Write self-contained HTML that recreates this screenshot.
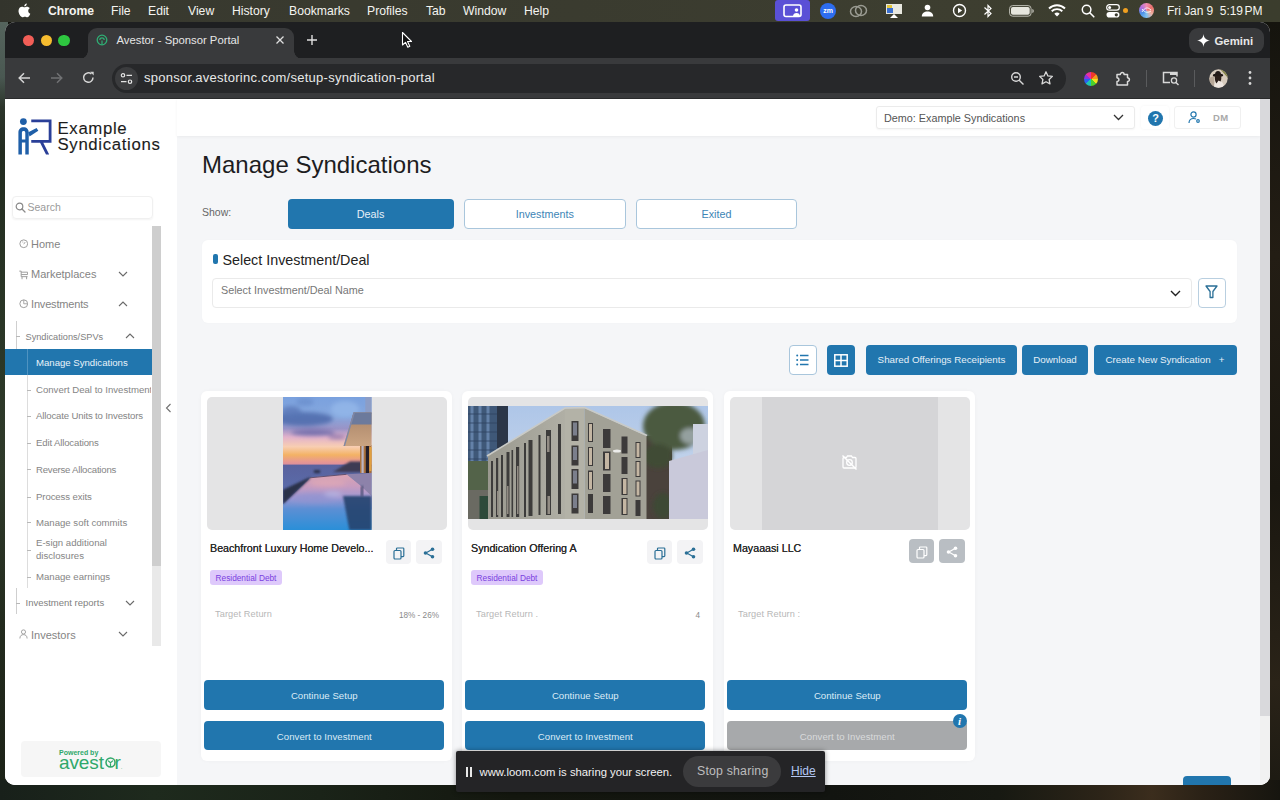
<!DOCTYPE html>
<html lang="en">
<head>
<meta charset="utf-8">
<title>Avestor - Sponsor Portal</title>
<style>
*{box-sizing:border-box;margin:0;padding:0}
html,body{width:1280px;height:800px;overflow:hidden}
body{position:relative;background:#14170f;font-family:"Liberation Sans",sans-serif;color:#222}
.abs{position:absolute}
#wall{left:0;top:0;width:1280px;height:800px;background:#12140e}
#walll{left:0;top:22px;width:8px;height:763px;background:linear-gradient(180deg,#55645d 0,#4a5852 55px,#2c352b 85px,#232c20 130px,#2a3626 300px,#2f3a2a 450px,#232b1e 600px,#1c2217 763px)}
#wallb{left:0;top:780px;width:1280px;height:20px;background:linear-gradient(90deg,#18201a 0,#1e2a1d 12%,#1a2318 25%,#14170f 40%,#121410 65%,#171912 78%,#2c2418 86%,#3b2d1d 90%,#2a2116 94%,#16150f 100%)}
/* menubar */
#menubar{left:0;top:0;width:1280px;height:22px;background:linear-gradient(90deg,#33342c 0,#38392f 10%,#3a3b2f 45%,#3d3e30 75%,#3b3d2d 100%);color:#fff;font-size:12.2px}
#menubar span.m{position:absolute;top:0;line-height:22px;white-space:nowrap;color:#f4f4f0}
/* window */
#win{left:5px;top:22px;width:1265px;height:763px;border-radius:10px 10px 10px 10px;overflow:hidden;background:#fff}
#tabbar{left:0;top:0;width:1265px;height:37px;background:#1e1f21}
#tab{left:83px;top:5.500px;width:206px;height:31.500px;background:#393a3c;border-radius:9px 9px 0 0}
#toolbar{left:0;top:36px;width:1265px;height:41px;background:#393a3c;border-bottom:1px solid #2a2b2c}
#url{left:107px;top:6px;width:954px;height:29px;border-radius:15px;background:#27282a}
#page{left:0;top:77px;width:1265px;height:686px;background:#f5f6f8;overflow:hidden}

/* page */
#side{left:0;top:0;width:172px;height:686px;background:#fff}
#hdr{left:172px;top:0;width:1083px;height:37px;background:#fff;box-shadow:0 1px 3px rgba(0,0,0,.05)}
.nav{position:absolute;font-size:11px;line-height:14px;color:#848484;white-space:nowrap}
.sub{position:absolute;font-size:9.600px;line-height:13px;color:#858585;white-space:nowrap;left:31px}
.tick{position:absolute;width:4px;height:1px;background:#b8b8b8}
.chev{position:absolute}
.btn{position:absolute;background:#2176ae;color:#fff;border-radius:4px;text-align:center;white-space:nowrap}

.card{position:absolute;top:292px;width:251px;height:370px;background:#fff;border-radius:6px;box-shadow:0 0 4px rgba(0,0,0,.03)}
.imgbox{position:absolute;left:6px;top:5.500px;width:240px;height:133px;border-radius:5px;background:#e4e4e5;overflow:hidden}
.ctitle{position:absolute;left:9px;top:150px;font-size:10.700px;line-height:14px;color:#2b2b2b;white-space:nowrap;letter-spacing:0;text-shadow:0 0 .12px #2b2b2b}
.ibtn{position:absolute;top:149px;width:25.500px;height:24px;border-radius:4px;background:#f3f3f5}
.tag{position:absolute;left:9px;top:278.500px;height:15.500px;width:72px;border-radius:3px;background:#dec9fb;color:#7a3fe0;font-size:8.300px;line-height:17px;text-align:center;white-space:nowrap}
.tr{position:absolute;left:14px;top:216.500px;font-size:9.200px;line-height:13px;color:#b7b7b7;white-space:nowrap;letter-spacing:.1px}
.tv{position:absolute;right:13px;top:217.500px;font-size:8.200px;line-height:13px;color:#8a8a8a;white-space:nowrap}
.cbtn{position:absolute;left:3.300px;width:240px;height:30px;border-radius:4px;background:#2176ae;color:#dcebf6;font-size:9.600px;line-height:31.500px;text-align:center;letter-spacing:.05px}
</style>
</head>
<body>
<div id="wall" class="abs"></div>
<div id="walll" class="abs"></div>
<div class="abs" style="left:1268px;top:22px;width:12px;height:778px;background:linear-gradient(180deg,#15140e 0,#231d14 30%,#1a1710 60%,#2a2318 85%,#1b1912 100%)"></div>
<div id="wallb" class="abs"></div>
<div id="menubar" class="abs">
 <svg class="abs" style="left:18px;top:3px" width="13" height="15" viewBox="0 0 13 15"><path fill="#fff" d="M9.1 3.7c.9 0 2 .5 2.7 1.5-2.3 1.4-1.9 4.6.5 5.5-.5 1.400-1.700 3.500-3.100 3.500-.8 0-1.300-.5-2.300-.5s-1.600.5-2.400.5C2.700 14.200.5 10.700.5 8 .5 5.200 2.300 3.700 4 3.700c1 0 1.800.600 2.500.600.600 0 1.500-.600 2.600-.600zM8.800.4c.1 1.400-1 2.900-2.500 2.900C6.100 1.900 7.400.5 8.800.4z"/></svg>
 <span class="m" style="left:48px;font-weight:bold">Chrome</span>
 <span class="m" style="left:111px">File</span>
 <span class="m" style="left:148px">Edit</span>
 <span class="m" style="left:188px">View</span>
 <span class="m" style="left:232px">History</span>
 <span class="m" style="left:289px">Bookmarks</span>
 <span class="m" style="left:367px">Profiles</span>
 <span class="m" style="left:426px">Tab</span>
 <span class="m" style="left:463px">Window</span>
 <span class="m" style="left:524px">Help</span>
 <div class="abs" style="left:775px;top:0;width:35px;height:21px;background:#5a50d6;border-radius:3px"></div>
 <svg class="abs" style="left:783px;top:4px" width="20" height="14" viewBox="0 0 20 14"><rect x="1" y="1" width="17" height="11.500" rx="2" fill="none" stroke="#fff" stroke-width="1.600"/><circle cx="13.500" cy="6" r="1.800" fill="#fff"/><path d="M10 12.500c0-2.500 1.500-3.600 3.500-3.600s3.500 1.100 3.500 3.600z" fill="#fff"/></svg>
 <div class="abs" style="left:820px;top:3px;width:16px;height:16px;border-radius:8px;background:#2d6df0;color:#fff;font-size:7px;font-weight:bold;line-height:15px;text-align:center">zm</div>
 <svg class="abs" style="left:849px;top:4px" width="19" height="14" viewBox="0 0 19 14"><ellipse cx="7" cy="7.500" rx="5.500" ry="5" fill="none" stroke="#9a9b92" stroke-width="1.500"/><ellipse cx="12" cy="6.500" rx="5.500" ry="5" fill="none" stroke="#9a9b92" stroke-width="1.500"/></svg>
 <svg class="abs" style="left:885px;top:3px" width="18" height="16" viewBox="0 0 18 16"><rect x="1" y="1" width="16" height="10" fill="#e8e8e0"/><rect x="2" y="5" width="6" height="5" fill="#3a6fd0"/><rect x="2" y="2" width="5" height="3" fill="#e2c53a"/><path d="M5 15l4-4 4 4z" fill="#fff"/></svg>
 <svg class="abs" style="left:921px;top:4px" width="13" height="13" viewBox="0 0 13 13"><circle cx="6.500" cy="3.500" r="2.800" fill="#fff"/><path d="M.8 12.500c0-3.500 2.500-5 5.700-5s5.700 1.500 5.700 5z" fill="#fff"/></svg>
 <svg class="abs" style="left:952px;top:3px" width="15" height="15" viewBox="0 0 15 15"><circle cx="7.500" cy="7.500" r="6" fill="none" stroke="#fff" stroke-width="1.400"/><path d="M6 4.800l4.200 2.700L6 10.200z" fill="#fff"/></svg>
 <svg class="abs" style="left:983px;top:3px" width="10" height="16" viewBox="0 0 10 16"><path d="M1.500 4.500l6.500 6L5 13.500v-11L8 5.500l-6.500 6" fill="none" stroke="#fff" stroke-width="1.200"/></svg>
 <svg class="abs" style="left:1009px;top:5px" width="26" height="12" viewBox="0 0 26 12"><rect x=".6" y=".6" width="21.500" height="10.600" rx="3" fill="none" stroke="#bdbdb4" stroke-width="1"/><rect x="2" y="2" width="18.700" height="7.800" rx="1.800" fill="#e6e6de"/><path d="M23.300 4v4c1-.3 1.500-1 1.500-2s-.5-1.700-1.500-2z" fill="#bdbdb4"/></svg>
 <svg class="abs" style="left:1048px;top:4px" width="18" height="13" viewBox="0 0 18 13"><path d="M1 4.500a11.500 11.500 0 0 1 16 0M3.700 7.300a7.600 7.600 0 0 1 10.600 0" fill="none" stroke="#fff" stroke-width="1.900"/><path d="M6.300 9.800a3.900 3.900 0 0 1 5.400 0L9 12.600z" fill="#fff"/></svg>
 <svg class="abs" style="left:1081px;top:4px" width="14" height="14" viewBox="0 0 14 14"><circle cx="5.600" cy="5.600" r="4.300" fill="none" stroke="#fff" stroke-width="1.500"/><path d="M8.800 8.800l4 4" stroke="#fff" stroke-width="1.600" stroke-linecap="round"/></svg>
 <svg class="abs" style="left:1106px;top:4px" width="14" height="14" viewBox="0 0 14 14"><rect x=".7" y=".7" width="12.600" height="5.400" rx="2.700" fill="none" stroke="#fff" stroke-width="1.200"/><circle cx="3.600" cy="3.400" r="1.500" fill="#fff"/><rect x=".5" y="8" width="13" height="5.600" rx="2.800" fill="#fff"/><circle cx="10.300" cy="10.800" r="1.600" fill="#3a3b2e"/></svg>
 <div class="abs" style="left:1123px;top:8px;width:5px;height:5px;border-radius:3px;background:#f0a020"></div>
 <div class="abs" style="left:1139px;top:3px;width:15px;height:15px;border-radius:8px;background:conic-gradient(#f08bb0,#e9706a,#f0b0a0,#7fc0f0,#4a90e8,#b070e0,#f08bb0)"></div>
 <svg class="abs" style="left:1139px;top:3px" width="15" height="15" viewBox="0 0 15 15"><path d="M3 9c3-5 6-5 9-2M3 6c3 4 6 4 9 2" fill="none" stroke="#fff" stroke-width="1" opacity=".85"/></svg>
 <span class="m" style="left:1167px;font-size:12px;letter-spacing:-.05px">Fri Jan 9&nbsp; 5:19<span style="margin-left:1.500px">PM</span></span>
</div>
<div id="win" class="abs">
 <div id="tabbar" class="abs">
  <div class="abs" style="left:18px;top:13px;width:11.200px;height:11.200px;border-radius:6px;background:#f25e57"></div>
  <div class="abs" style="left:35.800px;top:13px;width:11.200px;height:11.200px;border-radius:6px;background:#f6bc2f"></div>
  <div class="abs" style="left:53.400px;top:13px;width:11.200px;height:11.200px;border-radius:6px;background:#2ec640"></div>
  <div id="tab" class="abs"></div>
  <div class="abs" style="left:75px;top:29px;width:8px;height:8px;background:radial-gradient(circle at 0 0,transparent 7.500px,#393a3c 8px)"></div>
  <div class="abs" style="left:289px;top:29px;width:8px;height:8px;background:radial-gradient(circle at 100% 0,transparent 7.500px,#393a3c 8px)"></div>
  <svg class="abs" style="left:91px;top:12px" width="12" height="12" viewBox="0 0 12 12"><circle cx="6" cy="6" r="4.800" fill="none" stroke="#2fae74" stroke-width="1.300"/><path d="M6 10.500V6.500M3.800 6a2.200 2.200 0 0 1 4.400 0" fill="none" stroke="#2fae74" stroke-width="1.200"/></svg>
  <span class="abs" style="left:111.500px;top:11px;font-size:11.300px;line-height:14px;color:#e6e6e6;white-space:nowrap">Avestor - Sponsor Portal</span>
  <svg class="abs" style="left:270px;top:13px" width="10" height="10" viewBox="0 0 10 10"><path d="M1.500 1.500l7 7M8.500 1.500l-7 7" stroke="#e0e0e0" stroke-width="1.300"/></svg>
  <svg class="abs" style="left:301px;top:12px" width="12" height="12" viewBox="0 0 12 12"><path d="M6 1v10M1 6h10" stroke="#e0e0e0" stroke-width="1.400"/></svg>
  <svg class="abs" style="left:396px;top:9px" width="12" height="18" viewBox="0 0 12 18"><path d="M1.500 1.500v12.500l3-2.700 2.300 5 2-1-2.300-4.800h4z" fill="#111" stroke="#fff" stroke-width="1.100" stroke-linejoin="round"/></svg>
  <div class="abs" style="left:1184px;top:6px;width:75px;height:25px;border-radius:9px;background:#393a3c"></div>
  <svg class="abs" style="left:1192px;top:12px" width="13" height="13" viewBox="0 0 13 13"><path d="M6.500 0C7 4 9 6 13 6.500 9 7 7 9 6.500 13 6 9 4 7 0 6.500 4 6 6 4 6.500 0z" fill="#fff"/></svg>
  <span class="abs" style="left:1209.500px;top:11.500px;font-size:11.400px;font-weight:bold;line-height:14px;color:#e8e8e8;letter-spacing:0">Gemini</span>
 </div>
 <div id="toolbar" class="abs">
  <svg class="abs" style="left:13px;top:14px" width="13" height="12" viewBox="0 0 13 12"><path d="M12 6H1.500M6 1.200L1.200 6 6 10.800" fill="none" stroke="#d4d4d4" stroke-width="1.500"/></svg>
  <svg class="abs" style="left:45px;top:14px" width="13" height="12" viewBox="0 0 13 12"><path d="M1 6h10.500M7 1.200L11.800 6 7 10.800" fill="none" stroke="#707173" stroke-width="1.500"/></svg>
  <svg class="abs" style="left:77px;top:13px" width="13" height="13" viewBox="0 0 13 13"><path d="M11 6.500A4.700 4.700 0 1 1 9.400 3" fill="none" stroke="#d4d4d4" stroke-width="1.500"/><path d="M8.200.800h3.500v3.600z" fill="#d4d4d4"/></svg>
  <div id="url" class="abs"></div>
  <div class="abs" style="left:110px;top:9px;width:23px;height:23px;border-radius:12px;background:#3b3c3e"></div>
  <svg class="abs" style="left:115px;top:14px" width="13" height="13" viewBox="0 0 13 13"><circle cx="3" cy="3.300" r="1.700" fill="none" stroke="#e4e4e4" stroke-width="1.200"/><path d="M6.500 3.300h5.500M1 9.700h5.500" stroke="#e4e4e4" stroke-width="1.300"/><circle cx="10" cy="9.700" r="1.700" fill="none" stroke="#e4e4e4" stroke-width="1.200"/></svg>
  <span class="abs" style="left:139px;top:12px;font-size:13px;line-height:16px;color:#e8e8e8;white-space:nowrap;letter-spacing:.27px">sponsor.avestorinc.com/setup-syndication-portal</span>
  <svg class="abs" style="left:1005px;top:13px" width="15" height="15" viewBox="0 0 15 15"><circle cx="6" cy="6" r="4.300" fill="none" stroke="#d8d8d8" stroke-width="1.400"/><path d="M9.200 9.200l4.300 4.300M4 6h4" stroke="#d8d8d8" stroke-width="1.400"/></svg>
  <svg class="abs" style="left:1033px;top:12px" width="16" height="16" viewBox="0 0 16 16"><path d="M8 1.800l1.900 4.100 4.500.5-3.300 3.100.9 4.400L8 11.700l-4 2.200.9-4.400L1.600 6.400l4.500-.5z" fill="none" stroke="#d8d8d8" stroke-width="1.300" stroke-linejoin="round"/></svg>
  <div class="abs" style="left:1078.500px;top:13.500px;width:14px;height:14px;border-radius:7px;background:conic-gradient(#f03a2a 0 45deg,#f59a1a 45deg 90deg,#f2e21c 90deg 135deg,#4cd02c 135deg 180deg,#1fc3b0 180deg 225deg,#2a62f0 225deg 270deg,#8a34e0 270deg 315deg,#ea2fa0 315deg 360deg)"></div>
  <svg class="abs" style="left:1109px;top:11px" width="18" height="18" viewBox="0 0 18 18"><path d="M3 5.500h3.300a1.900 1.900 0 1 1 3.800 0h3.400v3.300a1.900 1.900 0 1 1 0 3.800v3.400H3v-3.400a1.900 1.900 0 1 0 0-3.800z" fill="none" stroke="#dadada" stroke-width="1.500" stroke-linejoin="round"/></svg>
  <div class="abs" style="left:1141px;top:12px;width:1px;height:17px;background:#5a5b5d"></div>
  <svg class="abs" style="left:1157px;top:12px" width="18" height="17" viewBox="0 0 18 17"><path d="M8 12.500H1.500v-10h13.500v4" fill="none" stroke="#d8d8d8" stroke-width="1.500"/><path d="M8 2.500h7v2.500H8z" fill="#d8d8d8"/><circle cx="12" cy="10.500" r="2.600" fill="none" stroke="#d8d8d8" stroke-width="1.300"/><path d="M14 12.500l2.500 2.500" stroke="#d8d8d8" stroke-width="1.400"/></svg>
  <div class="abs" style="left:1189px;top:12px;width:1px;height:17px;background:#5a5b5d"></div>
  <svg class="abs" style="left:1204px;top:11px" width="19" height="19" viewBox="0 0 19 19"><defs><clipPath id="av"><circle cx="9.500" cy="9.500" r="9.200"/></clipPath></defs><g clip-path="url(#av)"><rect width="19" height="19" fill="#d6cabc"/><path d="M11 0h8v9z" fill="#86864a"/><path d="M0 9l5-2v12H0z" fill="#b8a898"/><path d="M5 19c0-5 2-7 5-7s5 2.500 5 7z" fill="#eee6e0"/><ellipse cx="9" cy="6.200" rx="5.200" ry="1.700" fill="#1e1614"/><path d="M6 6c0-3 1.200-4 3-4s3 1 3 4z" fill="#231a18"/><path d="M6 6.500c-.5 3 0 6 1.500 8l2-3 2 1c1-2 1-4 .5-6z" fill="#2a1e1a"/></g></svg>
  <svg class="abs" style="left:1243px;top:12px" width="4" height="16" viewBox="0 0 4 16"><circle cx="2" cy="2.500" r="1.400" fill="#d8d8d8"/><circle cx="2" cy="8" r="1.400" fill="#d8d8d8"/><circle cx="2" cy="13.500" r="1.400" fill="#d8d8d8"/></svg>
 </div>
 <div id="page" class="abs">
  <div id="side" class="abs">
   <svg class="abs" style="left:13px;top:18px" width="34" height="38" viewBox="0 0 34 38">
<circle cx="5.400" cy="4.600" r="3.400" fill="#1f5fa8"/>
<path fill-rule="evenodd" d="M.400 37.400V15.500c0-3.300 2-5.300 5.200-5.300s5.150 2 5.150 5.300V37.400H7.300V25.500H3.900V37.400zM3.900 22.400h3.400v-6.500c0-1.200-.6-1.800-1.700-1.800s-1.700.600-1.700 1.800z" fill="#1f5fa8"/>
<path d="M10.300 15.300l8.300-4.200 1.700 2.700-8.800 5.600z" fill="#1f5fa8"/>
<path d="M13.250 2.400H33.500V25.800H25.300l5.900 11.600h-3.200L22.100 25.800H13.250V23H30.700V5.200H13.250z" fill="#2a3f98"/>
</svg>
<span class="abs" style="left:52.500px;top:21.900px;font-size:16.800px;line-height:16.500px;color:#1c1c1c;white-space:nowrap;letter-spacing:.65px;-webkit-text-stroke:.12px #1c1c1c">Example<br>Syndications</span>
   <div class="abs" style="left:7px;top:96.500px;width:141px;height:23px;border:1px solid #f0f0f0;border-radius:4px;box-shadow:0 1px 2px rgba(0,0,0,.05)"></div>
   <svg class="abs" style="left:10px;top:103px" width="11" height="11" viewBox="0 0 11 11"><circle cx="4.500" cy="4.500" r="3.300" fill="none" stroke="#8a8a8a" stroke-width="1.200"/><path d="M7 7l3 3" stroke="#8a8a8a" stroke-width="1.300" stroke-linecap="round"/></svg>
   <span class="abs" style="left:22.500px;top:102px;font-size:10.500px;line-height:13px;color:#9a9a9a">Search</span>
   <div class="abs" style="left:146.500px;top:127px;width:9px;height:340px;background:#cecece"></div>
   <div class="abs" style="left:146.500px;top:467px;width:9px;height:80px;background:#e9e9e9"></div>
   <!-- nav -->
   <svg class="abs" style="left:13.500px;top:140px" width="9.500" height="9.500" viewBox="0 0 10 10"><circle cx="5" cy="5" r="4.100" fill="none" stroke="#9a9a9a" stroke-width="1"/><path d="M5 5.500L6.500 3.200M3.500 3.200h1" stroke="#9a9a9a" stroke-width=".9" fill="none"/></svg>
   <span class="nav" style="left:26px;top:138px">Home</span>
   <svg class="abs" style="left:13.500px;top:171px" width="9.500" height="9.500" viewBox="0 0 10 10"><path d="M.300 1.200H2.300V7H9M2.300 2.300H9V4.800H2.300M3.200 7v2.700M8 7v2.700" fill="none" stroke="#9a9a9a" stroke-width="1"/></svg>
   <span class="nav" style="left:26px;top:168px">Marketplaces</span>
   <svg class="chev" style="left:113px;top:172px" width="10" height="6" viewBox="0 0 10 6"><path d="M1 1l4 4 4-4" fill="none" stroke="#6a6a6a" stroke-width="1.100"/></svg>
   <svg class="abs" style="left:13.500px;top:200px" width="9.500" height="9.500" viewBox="0 0 10 10"><circle cx="5" cy="5" r="4.100" fill="none" stroke="#9a9a9a" stroke-width="1"/><path d="M5 1v4h4" stroke="#9a9a9a" stroke-width=".9" fill="none"/></svg>
   <span class="nav" style="left:26px;top:198px;letter-spacing:-.18px">Investments</span>
   <svg class="chev" style="left:113px;top:202px" width="10" height="6" viewBox="0 0 10 6"><path d="M1 5l4-4 4 4" fill="none" stroke="#6a6a6a" stroke-width="1.100"/></svg>
   <div class="abs" style="left:10.500px;top:222px;width:1px;height:31px;background:#cfcfcf"></div>
   <div class="tick" style="left:11px;top:237px"></div>
   <span class="sub" style="left:20.500px;top:231.500px;font-size:9.200px;color:#808080">Syndications/SPVs</span>
   <svg class="chev" style="left:119.500px;top:234px" width="10" height="6" viewBox="0 0 10 6"><path d="M1 5l4-4 4 4" fill="none" stroke="#6a6a6a" stroke-width="1.100"/></svg>
   <div class="abs" style="left:0;top:250px;width:146.500px;height:26px;background:#2176ae"></div>
   <div class="abs" style="left:21.500px;top:276px;width:1px;height:213px;background:#d4d4d4;opacity:.8"></div><div class="abs" style="left:21.500px;top:250px;width:1px;height:26px;background:#4f93c1"></div>
   <span class="sub" style="top:257.200px;color:#eaf3fa">Manage Syndications</span>
   <div class="tick" style="left:22px;top:291px"></div><span class="sub" style="top:284px;width:115px;overflow:hidden">Convert Deal to Investment</span>
   <div class="tick" style="left:22px;top:317px"></div><span class="sub" style="top:310.300px;letter-spacing:-.15px">Allocate Units to Investors</span>
   <div class="tick" style="left:22px;top:344px"></div><span class="sub" style="top:337.200px;letter-spacing:-.15px">Edit Allocations</span>
   <div class="tick" style="left:22px;top:370px"></div><span class="sub" style="top:363.600px;letter-spacing:-.22px">Reverse Allocations</span>
   <div class="tick" style="left:22px;top:398px"></div><span class="sub" style="top:390.500px;letter-spacing:-.1px">Process exits</span>
   <div class="tick" style="left:22px;top:423px"></div><span class="sub" style="top:417px">Manage soft commits</span>
   <div class="tick" style="left:22px;top:451px"></div><span class="sub" style="top:438px;line-height:12.700px;white-space:normal;width:100px">E-sign additional disclosures</span>
   <div class="tick" style="left:22px;top:478px"></div><span class="sub" style="top:471px">Manage earnings</span>
   <div class="abs" style="left:10.500px;top:489px;width:1px;height:26px;background:#cfcfcf"></div>
   <div class="tick" style="left:11px;top:504px"></div>
   <span class="sub" style="left:20.500px;top:496.500px;font-size:9.500px;color:#808080">Investment reports</span>
   <svg class="chev" style="left:119.500px;top:501px" width="10" height="6" viewBox="0 0 10 6"><path d="M1 1l4 4 4-4" fill="none" stroke="#6a6a6a" stroke-width="1.100"/></svg>
   <svg class="abs" style="left:14px;top:530px" width="9" height="10" viewBox="0 0 10 11"><circle cx="5" cy="3.200" r="2.300" fill="none" stroke="#9a9a9a" stroke-width="1"/><path d="M1 10.500c0-3 1.700-4.300 4-4.300s4 1.300 4 4.300" fill="none" stroke="#9a9a9a" stroke-width="1"/></svg>
   <span class="nav" style="left:26px;top:528.500px">Investors</span>
   <svg class="chev" style="left:113px;top:532px" width="10" height="6" viewBox="0 0 10 6"><path d="M1 1l4 4 4-4" fill="none" stroke="#6a6a6a" stroke-width="1.100"/></svg>
   <svg class="abs" style="left:160px;top:304px" width="7" height="10" viewBox="0 0 7 10"><path d="M5.500 1L1.500 5l4 4" fill="none" stroke="#6f6f6f" stroke-width="1.100"/></svg>
   <div class="abs" style="left:16px;top:641.500px;width:140px;height:36.500px;border-radius:4px;background:#f6f6f6"></div>
<span class="abs" style="left:54px;top:648.500px;font-size:7px;font-weight:bold;line-height:9px;color:#2fa86a;white-space:nowrap">Powered by</span>
<span class="abs" style="left:54px;top:652.500px;font-size:19px;line-height:22px;color:#2fa86a;white-space:nowrap;letter-spacing:-.1px">avest<span style="display:inline-block;width:10.500px"></span>r<span style="font-size:6px">.</span></span>
<svg class="abs" style="left:100px;top:658px" width="11" height="11" viewBox="0 0 11 11"><circle cx="5.500" cy="5.500" r="4.500" fill="none" stroke="#2fa86a" stroke-width="1.500"/><path d="M5.500 10V5.800M3 3.600l2.500 2.200L8 3.600" fill="none" stroke="#2fa86a" stroke-width="1.200"/></svg>
  </div>
  <div id="hdr" class="abs">
   <div class="abs" style="left:699px;top:7px;width:259px;height:23px;border:1px solid #ebebeb;border-radius:3px;background:#fff;box-shadow:0 1px 2px rgba(0,0,0,.04)"></div>
   <span class="abs" style="left:707px;top:12px;font-size:10.800px;line-height:14px;color:#555;white-space:nowrap">Demo: Example Syndications</span>
   <svg class="abs" style="left:936px;top:15px" width="11" height="7" viewBox="0 0 11 7"><path d="M1 1l4.500 4.500L10 1" fill="none" stroke="#333" stroke-width="1.300"/></svg>
   <div class="abs" style="left:964px;top:7px;width:28px;height:23px;border-radius:3px;background:#fff;box-shadow:0 0 3px rgba(0,0,0,.05)"></div>
   <div class="abs" style="left:971px;top:11.500px;width:15px;height:15px;border-radius:8px;background:#2176ae;color:#fff;font-weight:bold;font-size:11px;line-height:15px;text-align:center">?</div>
   <div class="abs" style="left:997px;top:7px;width:67px;height:23px;border:1px solid #f0f0f0;border-radius:3px;background:#fff"></div>
   <svg class="abs" style="left:1011px;top:12px" width="13" height="13" viewBox="0 0 13 13"><circle cx="5.500" cy="3.500" r="2.600" fill="none" stroke="#2176ae" stroke-width="1.200"/><path d="M1 12c0-3 1.800-4.500 4.500-4.500 1 0 1.800.2 2.500.6" fill="none" stroke="#2176ae" stroke-width="1.200"/><circle cx="10" cy="10" r="1.900" fill="#2176ae"/><circle cx="10" cy="10" r=".7" fill="#fff"/></svg>
   <span class="abs" style="left:1036px;top:12.500px;font-size:9.500px;font-weight:bold;line-height:12px;color:#a9a9a9;letter-spacing:.3px">DM</span>
  </div>
  <span class="abs" style="left:197px;top:52.300px;font-size:24px;line-height:28px;color:#1d1d1f;white-space:nowrap">Manage Syndications</span>
  <span class="abs" style="left:197px;top:106.500px;font-size:10.500px;line-height:13px;color:#666">Show:</span>
  <div class="btn" style="left:282.500px;top:100px;width:166px;height:30px;font-size:10.800px;line-height:30px;color:#e6f0f8">Deals</div>
  <div class="btn" style="left:459px;top:100px;width:161.500px;height:30px;font-size:10.800px;line-height:29px;background:#fff;border:1px solid #a9c6dc;color:#3d85b6">Investments</div>
  <div class="btn" style="left:631px;top:100px;width:161px;height:30px;font-size:10.800px;line-height:29px;background:#fff;border:1px solid #a9c6dc;color:#3d85b6">Exited</div>
  <div class="abs" style="left:197px;top:141px;width:1035px;height:83px;background:#fff;border-radius:6px;box-shadow:0 0 3px rgba(0,0,0,.02)"></div>
  <div class="abs" style="left:207.500px;top:155px;width:5px;height:10px;border-radius:2px;background:#2176ae"></div>
  <span class="abs" style="left:217.500px;top:151.500px;font-size:14.300px;line-height:18px;color:#222;white-space:nowrap">Select Investment/Deal</span>
  <div class="abs" style="left:207px;top:178.500px;width:980px;height:30.500px;border:1px solid #eaeaea;border-radius:4px;background:#fff"></div>
  <span class="abs" style="left:216px;top:184px;font-size:10.800px;line-height:14px;color:#777;white-space:nowrap">Select Investment/Deal Name</span>
  <svg class="abs" style="left:1165px;top:190.500px" width="11" height="7" viewBox="0 0 11 7"><path d="M1 1l4.500 4.500L10 1" fill="none" stroke="#222" stroke-width="1.400"/></svg>
  <div class="abs" style="left:1192.500px;top:178.500px;width:28.500px;height:30.500px;border:1px solid #b9cfe0;border-radius:4px;background:#fff"></div>
  <svg class="abs" style="left:1200px;top:186px" width="13" height="14" viewBox="0 0 13 14"><path d="M1 1h11L7.900 6.500v6H5.100v-6z" fill="none" stroke="#2a6f96" stroke-width="1.300" stroke-linejoin="round"/></svg>
  <!-- toolbar row -->
  <div class="abs" style="left:783.500px;top:246px;width:28px;height:30px;border:1px solid #a9c6dc;border-radius:4px;background:#fff"></div>
  <svg class="abs" style="left:791px;top:255px" width="13" height="12" viewBox="0 0 13 12"><path d="M4 1.500h8.500M4 6h8.500M4 10.500h8.500" stroke="#2176ae" stroke-width="1.400"/><circle cx="1.200" cy="1.500" r="1" fill="#2176ae"/><circle cx="1.200" cy="6" r="1" fill="#2176ae"/><circle cx="1.200" cy="10.500" r="1" fill="#2176ae"/></svg>
  <div class="btn" style="left:822px;top:246px;width:28px;height:30px"></div>
  <svg class="abs" style="left:829px;top:254.500px" width="14" height="13" viewBox="0 0 14 13"><rect x=".8" y=".8" width="12.400" height="11.400" fill="none" stroke="#fff" stroke-width="1.500"/><path d="M7 1v11M1 6.500h12" stroke="#fff" stroke-width="1.500"/></svg>
  <div class="btn" style="left:861px;top:246px;width:151px;height:30px;font-size:9.800px;line-height:30px;color:#e6f0f8">Shared Offerings Receipients</div>
  <div class="btn" style="left:1017px;top:246px;width:66px;height:30px;font-size:9.800px;line-height:30px;color:#e6f0f8">Download</div>
  <div class="btn" style="left:1088.500px;top:246px;width:143px;height:30px;font-size:9.800px;line-height:30px;color:#e6f0f8">Create New Syndication &nbsp;&nbsp;+</div>
  <div class="card" style="left:196px">
<div class="imgbox"><svg class="abs" style="left:76px;top:0" width="88.500" height="133" viewBox="0 0 88.500 133">
<defs>
<linearGradient id="sky" x1="0" y1="0" x2="0" y2="1"><stop offset="0" stop-color="#7aa1de"/><stop offset=".28" stop-color="#86a8de"/><stop offset=".46" stop-color="#9a93c6"/><stop offset=".58" stop-color="#e2b2cb"/><stop offset=".72" stop-color="#f8ceb2"/><stop offset=".84" stop-color="#f3b264"/><stop offset=".93" stop-color="#e8998f"/><stop offset="1" stop-color="#d78aa2"/></linearGradient>
<linearGradient id="pool" x1="0" y1="0" x2="0" y2="1"><stop offset="0" stop-color="#dba4b2"/><stop offset=".22" stop-color="#c79cc0"/><stop offset=".42" stop-color="#9f98d2"/><stop offset=".62" stop-color="#5c8fd4"/><stop offset="1" stop-color="#2a8fd8"/></linearGradient>
<linearGradient id="sea" x1="0" y1="0" x2="0" y2="1"><stop offset="0" stop-color="#59629e"/><stop offset="1" stop-color="#5b73b4"/></linearGradient>
<linearGradient id="under" x1="0" y1="0" x2="0" y2="1"><stop offset="0" stop-color="#a98468"/><stop offset="1" stop-color="#caa482"/></linearGradient>
<filter id="bl" x="-20%" y="-20%" width="140%" height="140%"><feGaussianBlur stdDeviation=".9"/></filter>
<filter id="bl2" x="-30%" y="-60%" width="160%" height="220%"><feGaussianBlur stdDeviation="2.200"/></filter>
</defs>
<rect width="88.500" height="69" fill="url(#sky)"/>
<g filter="url(#bl2)"><ellipse cx="20" cy="22" rx="30" ry="7" fill="#4d6aaa" opacity=".85"/><ellipse cx="8" cy="14" rx="10" ry="5" fill="#5a78b8" opacity=".8"/><ellipse cx="30" cy="35.500" rx="22" ry="3.200" fill="#6b69a8" opacity=".85"/><ellipse cx="54" cy="40" rx="9" ry="2" fill="#7d6ca4" opacity=".8"/><ellipse cx="22" cy="5" rx="9" ry="4" fill="#6a8ccb" opacity=".7"/><ellipse cx="62" cy="12" rx="14" ry="8" fill="#93b8ea" opacity=".8"/></g>
<rect y="67.600" width="88.500" height="45" fill="url(#sea)"/>
<path d="M50 75l17-10.500h14V75z" fill="#3c3b52" filter="url(#bl)"/>
<path d="M63.600 77.300L88.500 76v24L78.400 89.200z" fill="#8d82aa"/>
<path d="M0 107.200L27.600 80.600l36-3.300 14.800 11.900L88.500 99v34H0z" fill="url(#pool)"/>
<g filter="url(#bl2)"><ellipse cx="32" cy="101" rx="22" ry="4.500" fill="#8f93d0" opacity=".7"/><ellipse cx="50" cy="97" rx="9" ry="3" fill="#b9b6e2" opacity=".7"/><ellipse cx="45" cy="86" rx="18" ry="3.500" fill="#e4acb4" opacity=".6"/></g>
<path d="M60 99.100h28.500V133H66.300z" fill="#27456f" opacity=".92" filter="url(#bl)"/>
<path d="M78 89h2v10.500h-2z" fill="#3a4068" filter="url(#bl)"/>
<path d="M26.700 80.200L0 92.800v14.400L27.600 81.100z" fill="#2b3049" filter="url(#bl)"/>
<path d="M27 80.800l36.600-3.500" stroke="#5a4a68" stroke-width=".9" fill="none"/>
<ellipse cx="34" cy="74.500" rx="3.500" ry="1.800" fill="#2e3350" filter="url(#bl)"/>
<rect x="77" y="48" width="11.500" height="28" fill="#a9713c"/>
<rect x="78.500" y="48" width="2.200" height="28" fill="#b9b4c4"/>
<rect x="82.800" y="48" width="3.200" height="28" fill="#241e2a"/>
<rect x="86.300" y="50" width="2.200" height="24" fill="#e0a040"/>
<rect x="82.300" y="0" width="6.200" height="17" fill="#8c9dc6"/>
<path d="M70.500 15.600H88.500V49L60.500 49z" fill="url(#under)"/>
<path d="M70.500 15.600H88.500v12L67.200 27.400z" fill="#6c7a9c"/>
<path d="M70.500 15.600L60.500 49l1.500 0L72 15.600z" fill="#8088a6"/>
</svg></div>
<span class="ctitle">Beachfront Luxury Home Develo...</span>
<div class="ibtn" style="left:184.800px;"><svg class="abs" style="left:7px;top:6.500px" width="12" height="13" viewBox="0 0 12 13"><rect x="1" y="3.500" width="7" height="8.500" rx="1" fill="none" stroke="#2a6f96" stroke-width="1.200"/><path d="M3.500 3.500V1.800c0-.5.300-.8.800-.8H10c.5 0 .8.300.8.800v7c0 .5-.3.800-.8.800H8" fill="none" stroke="#2a6f96" stroke-width="1.200"/></svg></div>
<div class="ibtn" style="left:215px;"><svg class="abs" style="left:7px;top:6.500px" width="12" height="12" viewBox="0 0 12 12"><path d="M9.500 2.300L2.800 6l6.700 3.700" fill="none" stroke="#2a6f96" stroke-width="1.200"/><circle cx="9.500" cy="2.300" r="1.800" fill="#2a6f96"/><circle cx="2.500" cy="6" r="1.800" fill="#2a6f96"/><circle cx="9.500" cy="9.700" r="1.800" fill="#2a6f96"/></svg></div>
<div class="tag" style="top:178.500px">Residential Debt</div>
<span class="tr">Target Return</span><span class="tv">18% - 26%</span>
<div class="cbtn" style="top:288.500px">Continue Setup</div>
<div class="cbtn" style="top:329.500px;height:29.500px">Convert to Investment</div>
</div>
<div class="card" style="left:457px">
<div class="imgbox"><svg class="abs" style="left:0;top:9.500px;filter:blur(.35px)" width="240" height="113" viewBox="0 0 240 113">
<defs>
<linearGradient id="bsky" x1="0" y1="0" x2="0" y2="1"><stop offset="0" stop-color="#aec6e8"/><stop offset="1" stop-color="#d3ddec"/></linearGradient>
<linearGradient id="lface" x1="0" y1="0" x2="1" y2="0"><stop offset="0" stop-color="#9a998f"/><stop offset="1" stop-color="#b0afa5"/></linearGradient>
<filter id="b1"><feGaussianBlur stdDeviation=".7"/></filter>
<filter id="b3"><feGaussianBlur stdDeviation="2"/></filter>
</defs>
<rect width="240" height="113" fill="url(#bsky)"/>
<rect x="0" y="0" width="40" height="60" fill="#3f5878"/>
<g stroke="#7593bd" stroke-width="3" opacity=".7"><path d="M4 0v58M12 0v58M20 0v58"/></g><g stroke="#2f4260" stroke-width="1" opacity=".8"><path d="M0 8h30M0 17h30M0 26h30M0 35h30M0 44h30M0 53h30"/></g>
<rect x="29" y="0" width="11" height="42" fill="#2b3648"/>
<rect x="0" y="55" width="22" height="30" fill="#52634a" filter="url(#b1)"/>
<rect x="0" y="84" width="22" height="29" fill="#6a6a62"/>
<rect x="11.500" y="90" width="9" height="23" fill="#2d4a3a"/>
<!-- right trees / bldgs -->
<rect x="176" y="30" width="28" height="83" fill="#4a423c"/>
<g filter="url(#b3)"><ellipse cx="206" cy="20" rx="31" ry="24" fill="#4b5a40"/><ellipse cx="222" cy="30" rx="10" ry="8" fill="#c4cfe0" opacity=".6"/><ellipse cx="190" cy="50" rx="14" ry="12" fill="#3f4c34"/><ellipse cx="195" cy="100" rx="10" ry="13" fill="#3c4836"/></g>
<rect x="225" y="18" width="15" height="30" fill="#cdd2e0"/>
<path d="M201 55l39-11v69h-39z" fill="#c9c9da"/>
<!-- main building -->
<path d="M20 49L97 2.500V113H20z" fill="url(#lface)"/>
<path d="M97 2.500l19.500-.5V113H97z" fill="#b3b2a7"/>
<path d="M116.500 2l62 28v83h-62z" fill="#a2a196"/>
<path d="M19 50L97 2l19.500-.5 62.500 28" fill="none" stroke="#c9cac6" stroke-width="1.600"/>
<g fill="#3d3c3b">
<rect x="23" y="55" width="2" height="56"/><rect x="28" y="52" width="2.200" height="59"/><rect x="33" y="49" width="2" height="62"/><rect x="38.500" y="46" width="3" height="65"/><rect x="43.500" y="44" width="1.600" height="67"/><rect x="48" y="41" width="3.200" height="70"/><rect x="56" y="37" width="2" height="74"/><rect x="60.500" y="34" width="4" height="76"/><rect x="70.500" y="29" width="2" height="80"/><rect x="78" y="24" width="5" height="85"/><rect x="90" y="18" width="3" height="90"/>
</g>
<g fill="#d9cfc0" opacity=".55"><rect x="29" y="85" width="1.200" height="24"/><rect x="39" y="80" width="1.500" height="28"/><rect x="49" y="60" width="1.500" height="48"/><rect x="79.500" y="90" width="2.500" height="18"/><rect x="79" y="30" width="2.500" height="16"/></g>
<g fill="#3c3a3a">
<rect x="103.500" y="15" width="7" height="20"/><rect x="103.500" y="39.500" width="7" height="20"/><rect x="103.500" y="63" width="7" height="20"/><rect x="103.500" y="87.500" width="7" height="20"/>
<rect x="120" y="17" width="5" height="19"/><rect x="120" y="41" width="5" height="19"/><rect x="120" y="64.500" width="5" height="19"/><rect x="120" y="88" width="5" height="19"/>
<rect x="135" y="23" width="7.500" height="19"/><rect x="135" y="45.500" width="7.500" height="19"/><rect x="135" y="68" width="7.500" height="18"/><rect x="135" y="90" width="7.500" height="18"/>
<rect x="153.500" y="30.500" width="6" height="17"/><rect x="153.500" y="51" width="6" height="17"/><rect x="153.500" y="72" width="6" height="17"/><rect x="153.500" y="92" width="6" height="17"/>
<rect x="167.500" y="36" width="5" height="16"/><rect x="167.500" y="55" width="5" height="16"/><rect x="167.500" y="74.500" width="5" height="16"/><rect x="167.500" y="94" width="5" height="16"/>
</g>
<g fill="#e6d6be" opacity=".8"><rect x="121" y="18" width="3" height="17"/><rect x="121" y="42" width="3" height="17"/><rect x="121" y="66" width="3" height="17"/><rect x="137" y="47" width="4" height="16"/><rect x="155" y="73" width="3.500" height="15"/><rect x="155" y="93" width="3.500" height="15"/><rect x="168.500" y="56" width="3" height="14"/><rect x="168.500" y="75.500" width="3" height="14"/><rect x="168.500" y="37" width="3" height="14"/></g>
<g fill="#7b7f8c"><rect x="105" y="16.500" width="4" height="13"/><rect x="105" y="41" width="4" height="13"/><rect x="105" y="64.500" width="4" height="13"/><rect x="105" y="89" width="4" height="13"/></g>
<ellipse cx="149" cy="45" rx="4" ry="1.500" fill="#fff" opacity=".8" filter="url(#b1)"/>
</svg></div>
<span class="ctitle">Syndication Offering A</span>
<div class="ibtn" style="left:184.800px;"><svg class="abs" style="left:7px;top:6.500px" width="12" height="13" viewBox="0 0 12 13"><rect x="1" y="3.500" width="7" height="8.500" rx="1" fill="none" stroke="#2a6f96" stroke-width="1.200"/><path d="M3.500 3.500V1.800c0-.5.300-.8.800-.8H10c.5 0 .8.300.8.800v7c0 .5-.3.800-.8.800H8" fill="none" stroke="#2a6f96" stroke-width="1.200"/></svg></div>
<div class="ibtn" style="left:215px;"><svg class="abs" style="left:7px;top:6.500px" width="12" height="12" viewBox="0 0 12 12"><path d="M9.500 2.300L2.800 6l6.700 3.700" fill="none" stroke="#2a6f96" stroke-width="1.200"/><circle cx="9.500" cy="2.300" r="1.800" fill="#2a6f96"/><circle cx="2.500" cy="6" r="1.800" fill="#2a6f96"/><circle cx="9.500" cy="9.700" r="1.800" fill="#2a6f96"/></svg></div>
<div class="tag" style="top:178.500px">Residential Debt</div>
<span class="tr">Target Return .</span><span class="tv">4</span>
<div class="cbtn" style="top:288.500px">Continue Setup</div>
<div class="cbtn" style="top:329.500px;height:29.500px">Convert to Investment</div>
</div>
<div class="card" style="left:719px">
<div class="imgbox"><div class="abs" style="left:31.500px;top:0;width:176.500px;height:133px;background:#d5d5d7"></div>
<svg class="abs" style="left:111px;top:57.500px" width="17" height="17" viewBox="0 0 17 17"><path d="M5.500 3.500l1-1.500h4l1 1.500h2.500c.6 0 1 .4 1 1V13c0 .6-.4 1-1 1H3c-.6 0-1-.4-1-1V4.500c0-.6.400-1 1-1z" fill="none" stroke="#fff" stroke-width="1.300"/><circle cx="8.500" cy="8.500" r="2.800" fill="none" stroke="#fff" stroke-width="1.300"/><path d="M1.500 1.500l14 14" stroke="#fff" stroke-width="1.400"/></svg></div>
<span class="ctitle">Mayaaasi LLC</span>
<div class="ibtn" style="left:184.800px;top:148px;height:23.500px;background:#b9bec3"><svg class="abs" style="left:7px;top:6.500px" width="12" height="13" viewBox="0 0 12 13"><rect x="1" y="3.500" width="7" height="8.500" rx="1" fill="none" stroke="#fff" stroke-width="1.200"/><path d="M3.500 3.500V1.800c0-.5.300-.8.800-.8H10c.5 0 .8.300.8.800v7c0 .5-.3.800-.8.800H8" fill="none" stroke="#fff" stroke-width="1.200"/></svg></div>
<div class="ibtn" style="left:215px;top:148px;height:23.500px;background:#b9bec3"><svg class="abs" style="left:7px;top:6.500px" width="12" height="12" viewBox="0 0 12 12"><path d="M9.500 2.300L2.800 6l6.700 3.700" fill="none" stroke="#fff" stroke-width="1.200"/><circle cx="9.500" cy="2.300" r="1.800" fill="#fff"/><circle cx="2.500" cy="6" r="1.800" fill="#fff"/><circle cx="9.500" cy="9.700" r="1.800" fill="#fff"/></svg></div>
<span class="tr">Target Return :</span>
<div class="cbtn" style="top:288.500px">Continue Setup</div>
<div class="cbtn" style="top:329.500px;height:29.500px;background:#a7a9ab;color:#d9dadb">Convert to Investment</div>
<div class="abs" style="left:228.500px;top:323px;width:14px;height:14px;border-radius:7px;background:#2176ae;color:#fff;font-family:'Liberation Serif',serif;font-style:italic;font-weight:bold;font-size:11px;line-height:14px;text-align:center">i</div>
</div>
<div class="btn" style="left:1178px;top:676.500px;width:48px;height:20px"></div>

  <div class="abs" style="left:1255px;top:0;width:10px;height:686px;background:#f1f1f1"></div>
  <div class="abs" style="left:1255px;top:0;width:10px;height:617px;background:#d9d9dc"></div>
  
 </div>
</div>
<div id="loom" class="abs" style="left:456px;top:751px;width:369px;height:40.500px;background:#242426;border-radius:2px;box-shadow:0 0 5px rgba(0,0,0,.45)">
 <div class="abs" style="left:9.500px;top:15.500px;width:2px;height:10px;background:#e8e8e8"></div><div class="abs" style="left:13.500px;top:15.500px;width:2px;height:10px;background:#e8e8e8"></div>
 <span class="abs" style="left:23.500px;top:13.500px;font-size:11.300px;line-height:14px;color:#f2f2f2;white-space:nowrap">www.loom.com is sharing your screen.</span>
 <div class="abs" style="left:227px;top:5px;width:98px;height:31px;border-radius:16px;background:#3b3b3d"></div>
 <span class="abs" style="left:241px;top:13px;font-size:12.300px;line-height:15px;color:#bdbdbd;white-space:nowrap;letter-spacing:.2px">Stop sharing</span>
 <span class="abs" style="left:335px;top:13px;font-size:12px;line-height:15px;color:#b4c8f4;white-space:nowrap;text-decoration:underline">Hide</span>
</div>
</body>
</html>
